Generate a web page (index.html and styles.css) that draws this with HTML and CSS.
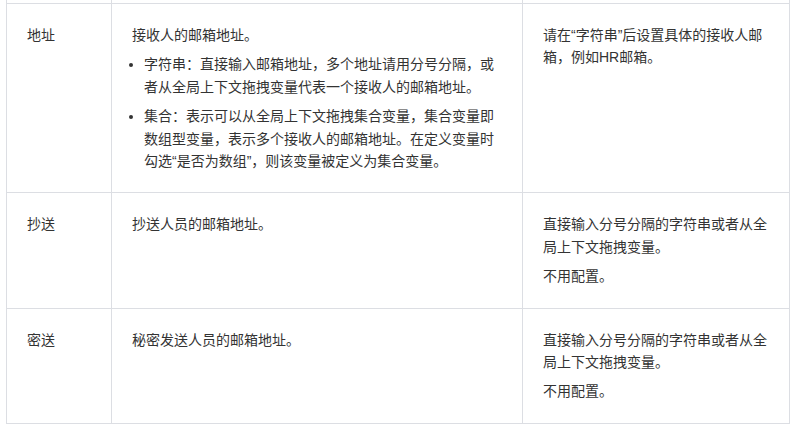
FILE: index.html
```html
<!DOCTYPE html>
<html lang="zh-CN">
<head>
    <meta charset="UTF-8">
    <meta name="viewport" content="width=device-width, initial-scale=1.0">
    <title>邮件参数</title>
    <link rel="stylesheet" href="styles.css">
</head>
<body>
    <div class="tableWrap">
        <table class="paramTable">
            <colgroup>
                <col class="colName">
                <col class="colDesc">
                <col class="colConf">
            </colgroup>
            <tbody>
                <!-- tail of the previous row, cut off by the top edge -->
                <tr class="cutRow">
                    <td></td><td></td><td></td>
                </tr>
                <tr>
                    <td>地址</td>
                    <td>
                        <p>接收人的邮箱地址。</p>
                        <ul>
                            <li>字符串：直接输入邮箱地址，多个地址请用分号分隔，或者从全局上下文拖拽变量代表一个接收人的邮箱地址。</li>
                            <li>集合：表示可以从全局上下文拖拽集合变量，集合变量即数组型变量，表示多个接收人的邮箱地址。在定义变量时勾选“是否为数组”，则该变量被定义为集合变量。</li>
                        </ul>
                    </td>
                    <td>
                        <p>请在“字符串”后设置具体的接收人邮箱，例如HR邮箱。</p>
                    </td>
                </tr>
                <tr>
                    <td>抄送</td>
                    <td>
                        <p>抄送人员的邮箱地址。</p>
                    </td>
                    <td>
                        <p>直接输入分号分隔的字符串或者从全局上下文拖拽变量。</p>
                        <p>不用配置。</p>
                    </td>
                </tr>
                <tr>
                    <td>密送</td>
                    <td>
                        <p>秘密发送人员的邮箱地址。</p>
                    </td>
                    <td>
                        <p>直接输入分号分隔的字符串或者从全局上下文拖拽变量。</p>
                        <p>不用配置。</p>
                    </td>
                </tr>
            </tbody>
        </table>
    </div>
</body>
</html>
```

FILE: styles.css
```css
body {
    margin: 0;
    background-color: #fff;
    font-family: "Liberation Sans", "Noto Sans CJK SC", sans-serif;
    font-size: 14px;
    line-height: 22.4px;
    color: #333;
}

.tableWrap {
    padding: 0 4px 0 6px;
}

.paramTable {
    width: 783px;
    border-collapse: collapse;
    table-layout: fixed;
}

.colName {
    width: 105px;
}

.colDesc {
    width: 411px;
}

.colConf {
    width: 267px;
}

.paramTable td {
    border: 1px solid #dcdee3;
    padding: 20px;
    vertical-align: top;
    text-align: left;
}

/* only the bottom few pixels of the row above are on screen */
.cutRow td {
    height: 3px;
    padding: 0;
    border-top: none;
}

.paramTable p {
    margin: 0 0 7px;
}

.paramTable p:last-child {
    margin-bottom: 0;
}

.paramTable ul {
    margin: 0;
    padding-left: 12px;
}

.paramTable li {
    margin-bottom: 7px;
}

.paramTable li:last-child {
    margin-bottom: 0;
}
```
